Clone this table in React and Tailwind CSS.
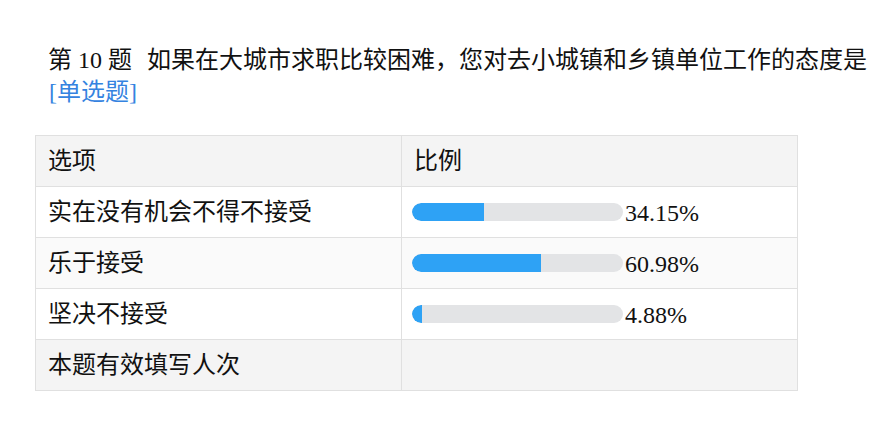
const rows = [
  { label: "实在没有机会不得不接受", pct: 34.15 },
  { label: "乐于接受", pct: 60.98 },
  { label: "坚决不接受", pct: 4.88 },
];

export default function App() {
  return (
    <div
      className="min-h-[443px] bg-white text-[24px] text-[#111]"
      style={{ fontFamily: '"Liberation Serif", "Noto Sans CJK SC", serif' }}
    >
      <div className="pl-[48px] pt-[44px] w-[876px] leading-[32px]">
        <span>第 10 题</span>
        <span className="ml-[15px]">如果在大城市求职比较困难，您对去小城镇和乡镇单位工作的态度是</span>
        <span className="text-[#3583e0] ml-[1px]">[单选题]</span>
      </div>

      <table className="ml-[35px] mt-[27px] w-[763px] border-collapse">
        <tbody>
          <tr className="bg-[#f4f4f4] h-[51px]">
            <td className="w-[366px] border border-[#e0e0e0] pl-[12px]">选项</td>
            <td className="border border-[#e0e0e0] pl-[12px]">比例</td>
          </tr>
          {rows.map((r, i) => (
            <tr key={i} className={`h-[51px] ${i === 1 ? "bg-[#fafafa]" : "bg-white"}`}>
              <td className="border border-[#e0e0e0] pl-[12px]">{r.label}</td>
              <td className="border border-[#e0e0e0] pl-[10px]">
                <div className="flex items-center">
                  <div className="w-[211px] h-[18px] rounded-full bg-[#e3e4e6] overflow-hidden">
                    <div className="h-full bg-[#2ea2f5] rounded-l-full" style={{ width: `${r.pct}%` }} />
                  </div>
                  <span className="ml-[2px] mt-[2px]">{r.pct.toFixed(2)}%</span>
                </div>
              </td>
            </tr>
          ))}
          <tr className="bg-[#f4f4f4] h-[51px]">
            <td className="border border-[#e0e0e0] pl-[12px]">本题有效填写人次</td>
            <td className="border border-[#e0e0e0]"></td>
          </tr>
        </tbody>
      </table>
    </div>
  );
}
